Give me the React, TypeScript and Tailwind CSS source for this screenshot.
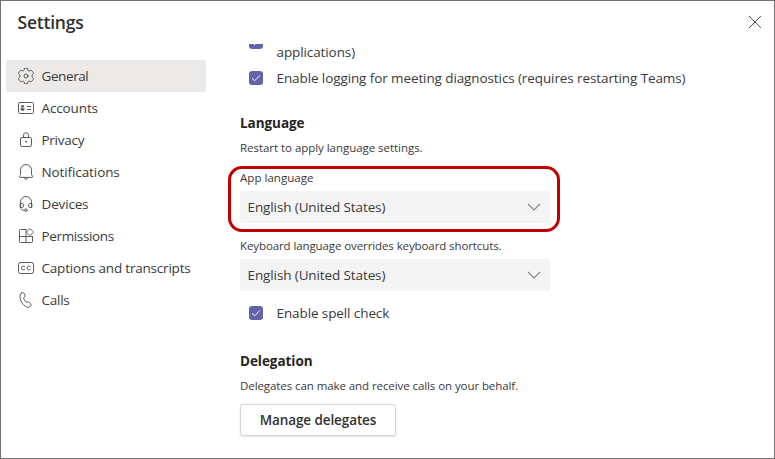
import type { ReactNode } from "react";

function Icon({ children }: { children: ReactNode }) {
  return (
    <svg
      width="16"
      height="16"
      viewBox="0 0 16 16"
      fill="none"
      stroke="#555453"
      strokeWidth="0.95"
      strokeLinecap="round"
      strokeLinejoin="round"
      className="shrink-0"
    >
      {children}
    </svg>
  );
}

const items: { label: string; tracking: string; icon: ReactNode }[] = [
  {
    label: "General",
    tracking: "tracking-[-0.4px]",
    icon: (
      <g transform="translate(8 8)">
        <path d="M-1.5-7.600Q0-8 1.500-7.600L1.900-5.900Q2.500-4.900 3.700-5.200L5.400-5.700Q6.900-4.400 7.600-2.500L6.300-1.200Q5.500 0 6.300 1.200L7.600 2.500Q6.900 4.400 5.400 5.700L3.700 5.200Q2.500 4.900 1.900 5.900L1.500 7.600Q0 8-1.500 7.600L-1.900 5.900Q-2.500 4.900-3.700 5.200L-5.400 5.700Q-6.900 4.400-7.600 2.500L-6.300 1.200Q-5.500 0-6.300-1.200L-7.600-2.500Q-6.900-4.400-5.400-5.700L-3.700-5.200Q-2.500-4.900-1.900-5.900Z" />
        <circle r="2" />
      </g>
    ),
  },
  {
    label: "Accounts",
    tracking: "tracking-[-0.12px]",
    icon: (
      <>
        <rect x="0.5" y="2.5" width="15" height="11" rx="1.2" />
        <circle cx="4.5" cy="6.4" r="1.4" fill="#555453" stroke="none" />
        <path d="M2.500 8.300h4v1q-.4 1.500-2 1.500t-2-1.500z" fill="#555453" stroke="none" />
        <path d="M9.300 6.500h3.400M9.300 9.500h3.400" />
      </>
    ),
  },
  {
    label: "Privacy",
    tracking: "tracking-[-0.26px]",
    icon: (
      <>
        <rect x="2.5" y="5.5" width="11" height="9" rx="1.3" />
        <path d="M5.500 5.300V3.200a2.500 2.500 0 0 1 5 0v2.100" />
        <circle cx="8" cy="9.7" r="0.9" fill="#555453" stroke="none" />
      </>
    ),
  },
  {
    label: "Notifications",
    tracking: "tracking-[-0.1px]",
    icon: (
      <>
        <path d="M2.500 10.600V6.100C2.500 3 4.700.6 8 .6s5.500 2.400 5.500 5.500v4.500l1.200 1.900q.1.900-.8.900H2.100q-.9 0-.8-.9z" />
        <path d="M6.200 13.600q.3 1.700 1.800 1.700t1.800-1.700" />
      </>
    ),
  },
  {
    label: "Devices",
    tracking: "tracking-[-0.16px]",
    icon: (
      <>
        <path d="M2.500 11.200V6a5.500 5.500 0 0 1 11 0v5.200" />
        <path d="M2.500 7.500h1.700q1.200 0 1.200 1.100v1.700q0 1.100-1.200 1.100H2.500zM13.500 7.500h-1.700q-1.200 0-1.200 1.100v1.700q0 1.100 1.200 1.100h1.700z" />
        <path d="M2.500 11q0 3.400 3.800 3.400" />
        <circle cx="7.8" cy="14.2" r="1.3" />
      </>
    ),
  },
  {
    label: "Permissions",
    tracking: "tracking-[-0.36px]",
    icon: (
      <>
        <path d="M8 1.500H2.500q-1 0-1 1v11q0 1 1 1h11q1 0 1-1V8.500M8 1.500v13M1.500 8.500h13" />
        <path d="M11.600.9q.4-.4.8 0l2.800 2.800q.4.4 0 .8l-2.800 2.800q-.4.4-.8 0L8.800 4.500q-.4-.4 0-.8z" />
      </>
    ),
  },
  {
    label: "Captions and transcripts",
    tracking: "tracking-[-0.2px]",
    icon: (
      <>
        <rect x="0.5" y="2.5" width="15" height="11" rx="2" />
        <path d="M6.700 6.600C5.600 5.600 3.500 5.900 3.500 8s2.100 2.400 3.200 1.400M12.300 6.600C11.200 5.600 9.100 5.900 9.100 8s2.100 2.400 3.200 1.400" />
      </>
    ),
  },
  {
    label: "Calls",
    tracking: "tracking-[-0.25px]",
    icon: (
      <path d="M3.400 1.100 4.600.7q1.200-.2 1.700.9l.7 1.700q.3 1-.4 1.700l-1 1q.4 2.300 2.400 4.200l1.400-.4q1-.2 1.600.6l1.700 1.500q.8 1 0 1.800l-.9.900q-1.300 1.200-3.100.4C5 13.500 2.300 9.500 2 4.300q-.1-2.300 1.400-3.200z" />
    ),
  },
];

function Checkbox() {
  return (
    <span className="flex size-[14px] shrink-0 items-center justify-center rounded-[3px] bg-[#6264a7]">
      <svg width="14" height="14" viewBox="0 0 14 14" fill="none" stroke="#fff" strokeWidth="1">
        <path d="M3 7.300l2.600 2.500L11 4.400" />
      </svg>
    </span>
  );
}

function Select() {
  return (
    <div className="flex h-8 w-[310px] shrink-0 items-center justify-between rounded-[3px] bg-[#f4f4f4] pl-[7.500px] pr-[9px]">
      <span className="pb-px tracking-[-0.11px]">English (United States)</span>
      <svg width="14" height="8" viewBox="0 0 14 8" fill="none" stroke="#858483" strokeWidth="1.1">
        <path d="M1 1l6 6 6-6" />
      </svg>
    </div>
  );
}

export default function App() {
  return (
    <div className="flex h-[459px] w-[775px] flex-col overflow-hidden border border-[#767171] bg-white font-['Open_Sans','Noto_Sans',sans-serif] text-[13.5px] leading-5 whitespace-nowrap text-[#3b3a39]">
      <header className="flex h-[43px] shrink-0 items-center justify-between pl-[16.5px] pr-[12px]">
        <h1 className="pb-0.5 text-[17.5px] leading-6 font-semibold tracking-[-0.22px] text-[#323130]">Settings</h1>
        <svg width="14" height="14" viewBox="0 0 14 14" fill="none" stroke="#555453" strokeWidth="1" className="-mt-0.5">
          <path d="M1 1l12 12M13 1L1 13" />
        </svg>
      </header>
      <div className="flex min-h-0 flex-1">
        <nav className="flex w-[205px] shrink-0 flex-col pt-4 pl-[5px]">
          {items.map((item, i) => (
            <div
              key={item.label}
              className={`flex h-8 items-center gap-[7.5px] rounded-[3px] pl-3 ${i === 0 ? "bg-[#ebeae9]" : ""}`}
            >
              <Icon>{item.icon}</Icon>
              <span className={item.tracking}>{item.label}</span>
            </div>
          ))}
        </nav>
        <main className="flex flex-1 flex-col items-start overflow-hidden pl-[34px]">
          <div className="flex h-[18px] items-start gap-[13.5px] pl-[9px]">
            <span className="-mt-[9px]">
              <Checkbox />
            </span>
            <span className="leading-4 tracking-[-0.1px]">applications)</span>
          </div>
          <div className="mt-[6px] flex h-5 items-center gap-[13.5px] pl-[9px]">
            <Checkbox />
            <span className="tracking-[-0.1px]">Enable logging for meeting diagnostics (requires restarting Teams)</span>
          </div>
          <h2 className="mt-[25px] font-bold tracking-[-0.05px] text-[#252423]">Language</h2>
          <p className="mt-[7px] text-[11.5px] leading-4 tracking-[-0.04px]">Restart to apply language settings.</p>
          <div className="relative mt-[14px]">
            <p className="mb-[5px] text-[11.5px] leading-4 tracking-[0.04px]">App language</p>
            <Select />
            <div className="pointer-events-none absolute -top-1 -left-3 h-[66px] w-[332px] rounded-[14px] border-[3px] border-[#c00000]" />
          </div>
          <p className="mt-[15px] mb-[5px] text-[11.5px] leading-4 tracking-[-0.1px]">
            Keyboard language overrides keyboard shortcuts.
          </p>
          <Select />
          <div className="mt-3 flex h-5 items-center gap-[13.5px] pl-[9px]">
            <Checkbox />
            <span className="tracking-[-0.1px]">Enable spell check</span>
          </div>
          <h2 className="mt-[28px] font-bold tracking-[-0.05px] text-[#252423]">Delegation</h2>
          <p className="mt-[7px] text-[11.5px] leading-4 tracking-[-0.08px]">
            Delegates can make and receive calls on your behalf.
          </p>
          <button className="mt-[10px] flex h-8 w-[156px] shrink-0 items-center justify-center rounded-[3px] border border-[#d8d7d6] bg-white font-semibold tracking-[-0.1px] text-[#323130] shadow-[0_1px_2px_rgba(0,0,0,0.12)]">
            Manage delegates
          </button>
        </main>
      </div>
    </div>
  );
}
